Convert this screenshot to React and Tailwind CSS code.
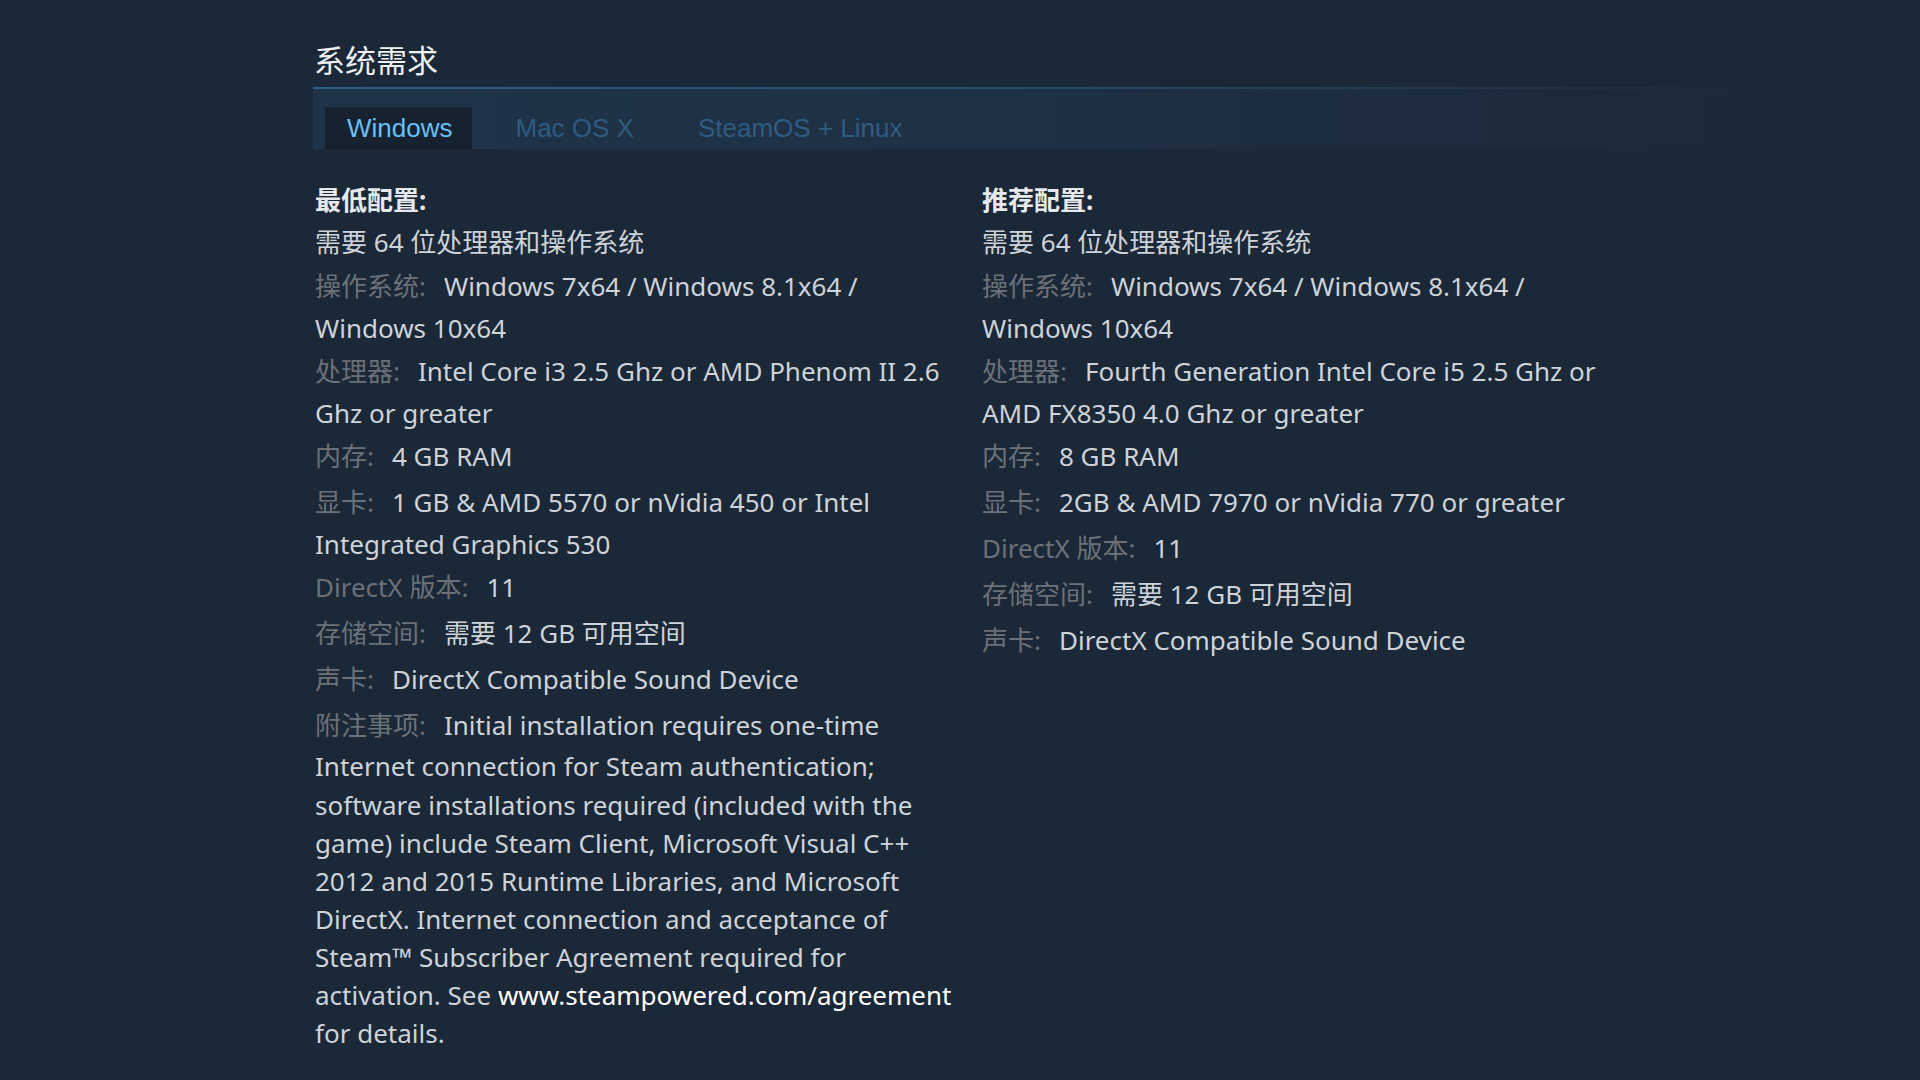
import React from "react";

const font = { fontFamily: '"Noto Sans", "Noto Sans CJK SC", sans-serif' };

function Line({ children, h = "h-[42px]", cls = "" }) {
  return (
    <div className={`${h} flex items-center whitespace-nowrap ${cls}`}>
      <div>{children}</div>
    </div>
  );
}

function Label({ children }) {
  return <span className="text-[#6b7177] mr-[18px]">{children}</span>;
}

function Value({ children }) {
  return <span className="text-[#cdd3d8]">{children}</span>;
}

function Header({ children }) {
  return (
    <Line>
      <span className="font-bold text-[#e6e9ec]">{children}</span>
    </Line>
  );
}

export default function App() {
  return (
    <div
      className="min-h-[1080px] w-full bg-[#1b2838] text-[26px] leading-none"
      style={font}
    >
      <div className="ml-[313px] w-[1487px] pt-[45px]">
        <div className="h-[31px] pl-[1px] text-[31px] leading-[31px] text-[#eef0f2]">系统需求</div>
        <div className="mt-[11px]">
          <div className="h-[2px] bg-gradient-to-r from-[#2d5f83] via-[#244a68] to-[#1b2838]"></div>
          <div className="h-[60px] pt-[18px] pl-[12px] flex items-end gap-[22px] bg-gradient-to-r from-[#1f3449] via-[#1e3044] to-[#1b2838]">
            <div
              className="h-[42px] pl-[22px] pr-[20px] flex items-center bg-[#172231] text-[#67c1f5] text-[26px]"
              style={{ fontFamily: '"Liberation Sans", Arial, sans-serif' }}
            >
              Windows
            </div>
            <div
              className="h-[42px] px-[21px] flex items-center text-[#2f5c81] text-[26px]"
              style={{ fontFamily: '"Liberation Sans", Arial, sans-serif' }}
            >
              Mac OS X
            </div>
            <div
              className="h-[42px] px-[21px] flex items-center text-[#2f5c81] text-[26px]"
              style={{ fontFamily: '"Liberation Sans", Arial, sans-serif' }}
            >
              SteamOS + Linux
            </div>
          </div>
        </div>

        <div className="mt-[30px] pl-[2px] grid grid-cols-[667px_1fr]">
          {/* Minimum */}
          <div>
            <Header>最低配置:</Header>
            <Line cls="mb-[2px]"><Value>需要 64 位处理器和操作系统</Value></Line>
            <div className="mb-[1px]">
              <Line><Label>操作系统:</Label><Value>Windows 7x64 / Windows 8.1x64 /</Value></Line>
              <Line><Value>Windows 10x64</Value></Line>
            </div>
            <div className="mb-[1px]">
              <Line><Label>处理器:</Label><Value>Intel Core i3 2.5 Ghz or AMD Phenom II 2.6</Value></Line>
              <Line><Value>Ghz or greater</Value></Line>
            </div>
            <Line cls="mb-[4px]"><Label>内存:</Label><Value>4 GB RAM</Value></Line>
            <div className="mb-[1px]">
              <Line><Label>显卡:</Label><Value>1 GB &amp; AMD 5570 or nVidia 450 or Intel</Value></Line>
              <Line><Value>Integrated Graphics 530</Value></Line>
            </div>
            <Line cls="mb-[4px]"><Label>DirectX 版本:</Label><Value>11</Value></Line>
            <Line cls="mb-[4px]"><Label>存储空间:</Label><Value>需要 12 GB 可用空间</Value></Line>
            <Line cls="mb-[4px]"><Label>声卡:</Label><Value>DirectX Compatible Sound Device</Value></Line>
            <div>
              <Line><Label>附注事项:</Label><Value>Initial installation requires one-time</Value></Line>
              <Line h="h-[40px]"><Value>Internet connection for Steam authentication;</Value></Line>
              <Line h="h-[38px]"><Value>software installations required (included with the</Value></Line>
              <Line h="h-[38px]"><Value>game) include Steam Client, Microsoft Visual C++</Value></Line>
              <Line h="h-[38px]"><Value>2012 and 2015 Runtime Libraries, and Microsoft</Value></Line>
              <Line h="h-[38px]"><Value>DirectX. Internet connection and acceptance of</Value></Line>
              <Line h="h-[38px]"><Value>Steam™ Subscriber Agreement required for</Value></Line>
              <Line h="h-[38px]">
                <Value>activation. See </Value>
                <span className="text-white">www.steampowered.com/agreement</span>
              </Line>
              <Line h="h-[38px]"><Value>for details.</Value></Line>
            </div>
          </div>

          {/* Recommended */}
          <div>
            <Header>推荐配置:</Header>
            <Line cls="mb-[2px]"><Value>需要 64 位处理器和操作系统</Value></Line>
            <div className="mb-[1px]">
              <Line><Label>操作系统:</Label><Value>Windows 7x64 / Windows 8.1x64 /</Value></Line>
              <Line><Value>Windows 10x64</Value></Line>
            </div>
            <div className="mb-[1px]">
              <Line><Label>处理器:</Label><Value>Fourth Generation Intel Core i5 2.5 Ghz or</Value></Line>
              <Line><Value>AMD FX8350 4.0 Ghz or greater</Value></Line>
            </div>
            <Line cls="mb-[4px]"><Label>内存:</Label><Value>8 GB RAM</Value></Line>
            <Line cls="mb-[4px]"><Label>显卡:</Label><Value>2GB &amp; AMD 7970 or nVidia 770 or greater</Value></Line>
            <Line cls="mb-[4px]"><Label>DirectX 版本:</Label><Value>11</Value></Line>
            <Line cls="mb-[4px]"><Label>存储空间:</Label><Value>需要 12 GB 可用空间</Value></Line>
            <Line><Label>声卡:</Label><Value>DirectX Compatible Sound Device</Value></Line>
          </div>
        </div>
      </div>
    </div>
  );
}
